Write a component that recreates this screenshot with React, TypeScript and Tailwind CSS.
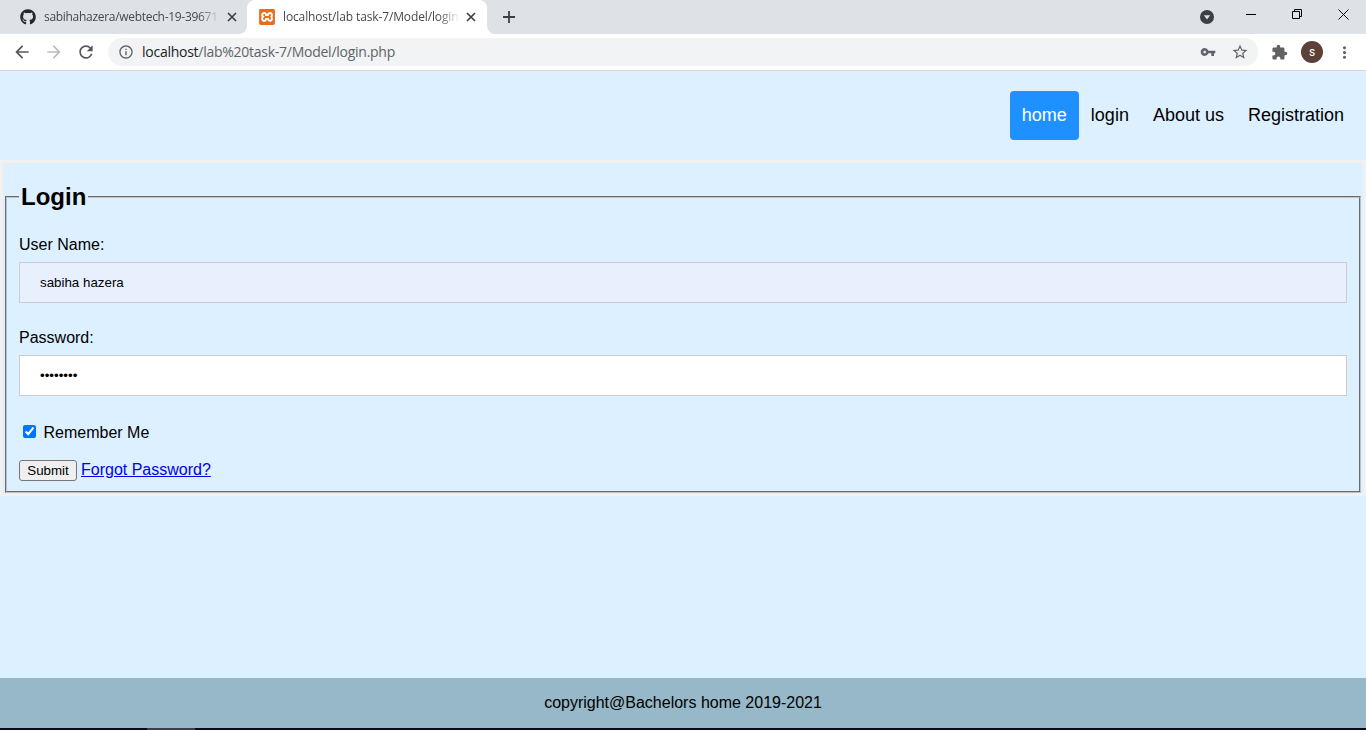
import React from "react";
import { FaGithub } from "react-icons/fa";
import { SiXampp } from "react-icons/si";
import {
  MdArrowBack,
  MdArrowForward,
  MdRefresh,
  MdInfoOutline,
  MdVpnKey,
  MdStarBorder,
  MdExtension,
  MdMoreVert,
} from "react-icons/md";

function CloseGlyph() {
  return (
    <svg width="10" height="10" viewBox="0 0 10 10" className="shrink-0">
      <path d="M1 1l8 8M9 1l-8 8" stroke="#3c4043" strokeWidth="1.7" fill="none" />
    </svg>
  );
}

function TabStrip() {
  return (
    <div className="flex h-[34px] shrink-0 bg-[#dee1e6] text-[#45494d]">
      <div className="flex h-[34px] w-[239px] items-center pl-[20px] text-[12px]">
        <FaGithub size={16} color="#24292e" className="shrink-0" />
        <div className="ml-[8px] w-[174px] whitespace-nowrap tracking-[-0.3px] [mask-image:linear-gradient(to_right,#000_154px,transparent_176px)]">
          sabihahazera/webtech-19-39671-
        </div>
        <div className="ml-[9px]">
          <CloseGlyph />
        </div>
      </div>
      <svg width="8" height="34" className="shrink-0">
        <path d="M0 34a8 8 0 0 0 8-8V34z" fill="#fff" />
      </svg>
      <div className="flex h-[34px] w-[240px] items-center rounded-t-[8px] bg-white pl-[12px] text-[12px]">
        <SiXampp size={16} color="#e96d1f" className="shrink-0" />
        <div className="ml-[8px] w-[175px] whitespace-nowrap tracking-[-0.13px] [mask-image:linear-gradient(to_right,#000_155px,transparent_177px)]">
          localhost/lab task-7/Model/login
        </div>
        <div className="ml-[8px]">
          <CloseGlyph />
        </div>
      </div>
      <svg width="8" height="34" className="shrink-0">
        <path d="M8 34a8 8 0 0 1-8-8V34z" fill="#fff" />
      </svg>
      <svg width="12" height="12" viewBox="0 0 12 12" className="ml-[8px] mt-[11px]">
        <path d="M6 0v12M0 6h12" stroke="#3c4043" strokeWidth="1.8" />
      </svg>
      <div className="ml-auto flex h-[34px] pr-[17px]">
        <svg width="14" height="14" viewBox="0 0 14 14" className="mt-[10px]">
          <circle cx="7" cy="7" r="7" fill="#3c4043" />
          <path d="M3.8 5.2h6.4L7 9.6z" fill="#dee1e6" />
        </svg>
        <svg width="10" height="10" className="ml-[32px] mt-[9px]">
          <path d="M0 5.5h10" stroke="#000" />
        </svg>
        <svg width="11" height="11" className="ml-[36px] mt-[9px]">
          <path d="M.5 2.5h7v7h-7zM2.5 2.5v-2h7v7h-2" fill="none" stroke="#000" />
        </svg>
        <svg width="11" height="11" className="ml-[35px] mt-[9px]">
          <path d="M.5.5l10 10M10.5.5l-10 10" stroke="#000" />
        </svg>
      </div>
    </div>
  );
}

function Toolbar() {
  return (
    <div className="flex h-[37px] shrink-0 items-center border-b border-[#d5d8dc] bg-white pl-[12px] text-[#5f6368]">
      <MdArrowBack size={20} color="#54585d" />
      <MdArrowForward size={20} color="#babcbe" className="ml-[12px]" />
      <MdRefresh size={20} color="#54585d" className="ml-[12px]" />
      <div className="ml-[12px] flex h-[28px] w-[1150px] items-center rounded-full bg-[#f1f3f4] pl-[10px] pr-[9px]">
        <MdInfoOutline size={16} />
        <div className="ml-[8px] whitespace-nowrap text-[14px] leading-5 tracking-[-0.26px]">
          <span className="text-[#202124]">localhost</span>/lab%20task-7/Model/login.php
        </div>
        <MdVpnKey size={16} className="ml-auto" />
        <MdStarBorder size={18} className="ml-[15px]" />
      </div>
      <MdExtension size={17} className="ml-[13px]" />
      <div className="ml-[13px] flex h-[22px] w-[22px] items-center justify-center rounded-full bg-[#5d4037] font-['Roboto',sans-serif] text-[12px] text-white">
        s
      </div>
      <MdMoreVert size={19} className="ml-[12px]" />
    </div>
  );
}

function SiteNav() {
  return (
    <nav className="flex h-[89px] shrink-0 justify-end pr-[10px] pt-[20px] text-[18px] leading-[25px]">
      <a className="h-[49px] rounded-[4px] bg-[#1e90ff] p-[12px] text-white">home</a>
      <a className="p-[12px]">login</a>
      <a className="p-[12px]">About us</a>
      <a className="p-[12px]">Registration</a>
    </nav>
  );
}

const field =
  "block h-[41px] w-full border border-[#cccccc] px-[20px] text-[13.333px] text-black outline-none";

function LoginForm() {
  return (
    <form className="h-[336px] shrink-0 border-[3px] border-[#f1f1f1] pt-[20px]">
      <fieldset className="mx-[2px] h-[310px] border-2 border-[#c0c0c0] px-[12px] [border-style:groove]">
        <legend className="px-[2px] text-[24px] font-bold leading-[28px]">Login</legend>
        <label className="mt-[25px] block text-[16px] leading-[18px]">User Name:</label>
        <input className={field + " mt-[8px] bg-[#e8f0fe]"} defaultValue="sabiha hazera" />
        <label className="mt-[26px] block text-[16px] leading-[18px]">Password:</label>
        <input type="password" className={field + " mt-[8px] bg-white"} defaultValue="password" />
        <label className="mt-[28px] flex h-[18px] items-center text-[16px] leading-[18px]">
          <input type="checkbox" defaultChecked className="mb-[4px] ml-[4px] mr-[7.5px] h-[13px] w-[13px]" />
          Remember Me
        </label>
        <div className="mt-[18px] flex text-[16px] leading-[20px]">
          <button
            type="button"
            className="h-[21px] w-[58px] rounded-[3px] border border-[#767676] bg-[#efefef] text-[13.333px] leading-[19px]"
          >
            Submit
          </button>
          <a className="ml-[4px] text-[#0000ee] underline">Forgot Password?</a>
        </div>
      </fieldset>
    </form>
  );
}

export default function App() {
  return (
    <div className="flex h-[730px] w-[1366px] flex-col overflow-hidden bg-[#ddf0ff] font-['Open_Sans',sans-serif]">
      <TabStrip />
      <Toolbar />
      <div className="flex flex-1 flex-col font-['Liberation_Sans',Arial,sans-serif] text-black">
        <SiteNav />
        <LoginForm />
        <footer className="mt-auto h-[50px] bg-[#96b8c8] pt-[16px] text-center text-[16px] leading-[18px]">
          copyright@Bachelors home 2019-2021
        </footer>
      </div>
      <div className="h-[2px] shrink-0 bg-[#070b16] pl-[147px]">
        <div className="h-[2px] w-[48px] bg-[#3c3f48]" />
      </div>
    </div>
  );
}
